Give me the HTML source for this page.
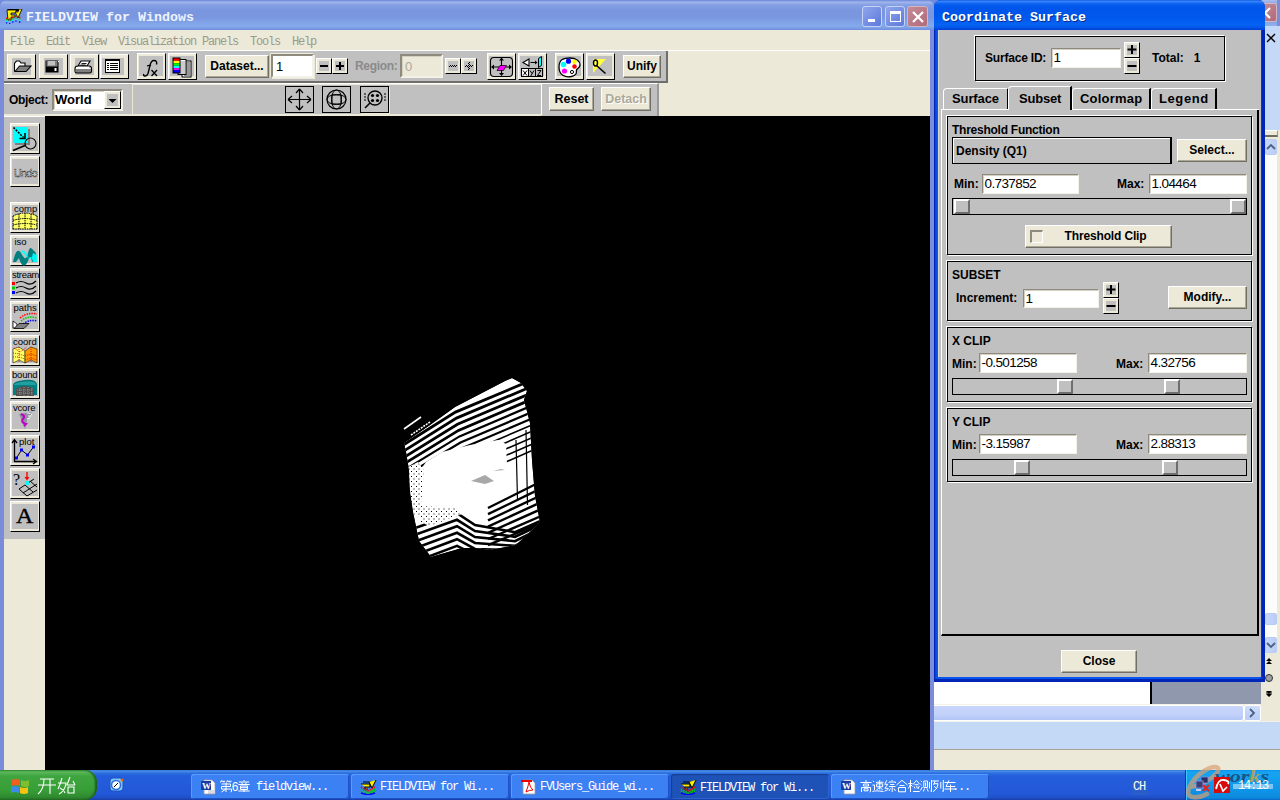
<!DOCTYPE html>
<html><head><meta charset="utf-8">
<style>
*{margin:0;padding:0;box-sizing:border-box}
html,body{width:1280px;height:800px;overflow:hidden;background:#ECE9D8;font-family:"Liberation Sans",sans-serif}
.a{position:absolute}
.sans{font-family:"Liberation Sans",sans-serif}
.b{font-weight:bold}
.mono{font-family:"Liberation Mono",monospace}
/* XP-ish beige push button */
.pb{position:absolute;background:#ECE9D8;border-top:1px solid #fff;border-left:1px solid #fff;border-right:1px solid #716F64;border-bottom:1px solid #716F64;box-shadow:inset -1px -1px 0 #ACA899;font:bold 12px "Liberation Sans",sans-serif;color:#000;text-align:center;white-space:nowrap}
/* toolbar icon button */
.tb{position:absolute;background:#ECE9D8;border-top:1px solid #fff;border-left:1px solid #fff;border-right:1px solid #000;border-bottom:1px solid #000}
.tb>i{position:absolute;left:4px;top:3px;right:3px;bottom:3px;background:#C0C0C0;display:block}
.tb svg{position:absolute;left:0;top:0}
/* text field */
.tf{position:absolute;background:#fff;border-top:1px solid #8E8B7E;border-left:1px solid #8E8B7E;border-right:1px solid #F4F2E8;border-bottom:1px solid #F4F2E8;box-shadow:inset 1px 1px 0 #D4D0C4;font:12px "Liberation Sans",sans-serif;color:#000;padding-left:3px;white-space:nowrap}
.lbl{position:absolute;font:bold 12px "Liberation Sans",sans-serif;color:#000;white-space:nowrap}
.grp{position:absolute;border:1px solid #000;box-shadow:-1px -1px 0 #fff,1px 1px 0 #fff}
.sld{position:absolute;border:1px solid #000;background:#C0C0C0}
.thumb{position:absolute;top:0;width:16px;height:15px;background:#C0C0C0;border-top:2px solid #fff;border-left:2px solid #fff;border-right:2px solid #6E6E6E;border-bottom:2px solid #6E6E6E}
.spin{position:absolute;background:#ECE9D8;border-top:1px solid #fff;border-left:1px solid #fff;border-right:1px solid #000;border-bottom:1px solid #000}
.spin::before{content:"";position:absolute;left:2px;top:2px;right:2px;bottom:2px;background:#C0C0C0}
.spin svg{position:relative}
.spin svg.a{position:absolute}
.tsk{position:absolute;top:774px;height:25px;border-radius:3px;background:#3C81F3;box-shadow:inset 1px 1px 0 #5A9BFF,inset -1px -1px 0 #1D52C4;color:#fff;font:12px "Liberation Mono",monospace;letter-spacing:-1.2px;white-space:nowrap}
</style></head>
<body>

<!-- ================= MAIN WINDOW ================= -->
<div class="a" style="left:0;top:0;width:1280px;height:20px;background:#6F8BDD"></div>
<div class="a" style="left:0;top:0;width:934px;height:770px;background:#7B8CDB;border-radius:7px 7px 0 0"></div>
<!-- title bar -->
<div class="a" style="left:0;top:0;width:934px;height:30px;border-radius:7px 7px 0 0;background:linear-gradient(#6F8BDD 0,#7E98E0 1px,#A3B9EC 2px,#97AEE9 3px,#859FE4 5px,#7A96DF 10px,#7A96DF 17px,#7FA2E6 22px,#83AAEC 26px,#7C9FE6 28px,#6F8BDD 30px)"></div>
<div class="a mono b" style="left:26px;top:10px;font-size:13.33px;color:#EEF2FC;letter-spacing:0px">FIELDVIEW for Windows</div>
<!-- app icon -->
<svg class="a" style="left:6px;top:9px" width="17" height="15" viewBox="0 0 17 15">
<rect x="1.5" y="0" width="14" height="2" fill="#000"/>
<path d="M1 1h9v3H5v2h4v2H5v3H2z" fill="#FFEF00" stroke="#000" stroke-width=".8"/>
<path d="M9 3l3 6 4-9h-3l-1 3z" fill="#FFEF00" stroke="#000" stroke-width=".8"/>
<g fill="none" stroke-width="1.3">
<path d="M0 9q3 2 6 0t6-1 4 0" stroke="#f00" stroke-dasharray="1.3 2"/>
<path d="M0 10.5q3 2 6 0t6-1 4 0" stroke="#0c0" stroke-dasharray="1.3 2"/>
<path d="M0 12q3 2 6 0t6-1 4 0" stroke="#0ff" stroke-dasharray="1.3 2"/>
<path d="M0 13.5q3 2 6 0t6-1 4 0" stroke="#00f" stroke-dasharray="1.3 2"/>
</g>
</svg>
<!-- title buttons -->
<div class="a" style="left:862px;top:6px;width:20px;height:21px;border:1px solid #C5D3F5;border-radius:3px;background:linear-gradient(135deg,#8FA6EC,#5D79DC)"><div class="a" style="left:5px;top:12px;width:7px;height:3px;background:#fff"></div></div>
<div class="a" style="left:885px;top:6px;width:20px;height:21px;border:1px solid #C5D3F5;border-radius:3px;background:linear-gradient(135deg,#8FA6EC,#5D79DC)"><div class="a" style="left:4px;top:4px;width:11px;height:11px;border:1px solid #fff;border-top-width:3px"></div></div>
<div class="a" style="left:907px;top:6px;width:21px;height:21px;border:1px solid #D2B7C0;border-radius:3px;background:linear-gradient(135deg,#C48B97,#B06A78)">
<svg class="a" style="left:3px;top:3px" width="14" height="14"><path d="M2 2L12 12M12 2L2 12" stroke="#fff" stroke-width="2.2"/></svg></div>

<div class="a" style="left:4px;top:30px;width:926px;height:740px;background:#ECE9D8"></div>
<!-- menu bar -->
<div class="a" style="left:4px;top:30px;width:926px;height:20px;background:#ECE9D8"></div>
<div class="a" style="left:4px;top:50px;width:926px;height:1px;background:#fff"></div>
<div class="a mono" style="left:10px;top:35px;font-size:12px;letter-spacing:-1.2px;color:#9C9A8A;white-space:pre">File  Edit  View  Visualization Panels  Tools  Help</div>

<!-- toolbar row 1 -->
<div class="a" style="left:4px;top:51px;width:664px;height:32px;background:#C0C0C0;border-right:2px solid #6E6E6E;border-bottom:2px solid #6E6E6E"></div>
<!-- toolbar row 2 -->
<div class="a" style="left:4px;top:83px;width:655px;height:33px;background:#C0C0C0;border-top:1px solid #fff;border-right:2px solid #9A9A9A"></div>
<div class="a" style="left:132px;top:84px;width:409px;height:31px;border-left:1px solid #ECE9D8;border-top:1px solid #ECE9D8;border-bottom:1px solid #ECE9D8"></div>
<div class="a" style="left:541px;top:84px;width:1px;height:31px;background:#fff"></div>
<div class="a" style="left:4px;top:114px;width:537px;height:2px;background:#ECE9D8"></div>

<!-- left toolbar -->
<div class="a" style="left:4px;top:116px;width:41px;height:423px;background:#C0C0C0;border-top:1px solid #fff"></div>

<!-- viewport -->
<div class="a" style="left:45px;top:116px;width:885px;height:654px;background:#000"></div>

<!-- toolbar1 buttons -->
<div class="tb" style="left:7px;top:54px;width:29px;height:25px"><i style="left:4px;top:3px;right:4px;bottom:3px"></i>
<svg style="left:-1px;top:-1px" width="29" height="25"><path d="M7.5 17.5V9.5l2-2.5h3l1.5 2h4v3" fill="#fff" stroke="#000" stroke-width="1.1"/><path d="M8 17.5L12.5 12H24L19 17.5Z" fill="#808080" stroke="#000" stroke-width="1.1"/></svg></div>
<div class="tb" style="left:39px;top:54px;width:29px;height:25px"><i style="left:4px;top:3px;right:4px;bottom:3px"></i>
<svg style="left:-1px;top:-1px" width="29" height="25"><rect x="6.5" y="6.5" width="13" height="12" fill="#000"/><rect x="7.5" y="7" width="11" height="5.5" fill="#808080"/><rect x="9" y="7" width="7" height="4.5" fill="#C0C0C0"/><rect x="15.5" y="14" width="2" height="3" fill="#fff"/><rect x="19" y="7" width="1" height="1" fill="#fff"/></svg></div>
<div class="tb" style="left:70px;top:54px;width:29px;height:25px"><i style="left:4px;top:3px;right:4px;bottom:3px"></i>
<svg style="left:-1px;top:-1px" width="29" height="25"><path d="M8 12l3-5h9l-3 5z" fill="#fff" stroke="#000" stroke-width="1.1"/><path d="M11.5 9.5h5M10.5 11h5" stroke="#000" stroke-width=".9"/><path d="M5 14.5q0-2.5 3-2.5h11q2.5 0 2.5 2.5v3q0 1.5-2 1.5H7q-2 0-2-1.5z" fill="#fff" stroke="#000" stroke-width="1.1"/><path d="M5.5 16h16M6 18h15" stroke="#000" stroke-width="1"/><path d="M19 13l2 1M19 15.5l2 1" stroke="#888" stroke-width="1"/></svg></div>
<div class="tb" style="left:100px;top:54px;width:29px;height:25px"><i style="left:1px;top:3px;right:4px;bottom:3px"></i>
<svg style="left:-1px;top:-1px" width="29" height="25"><rect x="5.5" y="5.5" width="14" height="13" fill="#fff" stroke="#000"/><rect x="5" y="5" width="15" height="2" fill="#000"/><path d="M7 9.5h2M10 9.5h8M7 11.5h2M10 11.5h8M7 13.5h2M10 13.5h8M7 15.5h2M10 15.5h8" stroke="#000" stroke-width="1"/></svg></div>
<div class="tb" style="left:137px;top:53px;width:29px;height:27px"><i style="left:1px;top:2px;right:2px;bottom:3px"></i>
<svg style="left:-1px;top:-1px" width="29" height="27"><path d="M19.5 11.5q1-4-2.5-4q-3 0-4 5l-2 8q-1 3-3.5 2.5q-1.5-.5-.5-2" fill="none" stroke="#000" stroke-width="1.4"/><path d="M10 13q2-1 4-.5" stroke="#000" stroke-width="1.1"/><path d="M14.5 17l5.5 6M20 17l-5.5 6" stroke="#000" stroke-width="1.3"/></svg></div>
<div class="tb" style="left:168px;top:53px;width:29px;height:27px"><i style="left:1px;top:2px;right:2px;bottom:3px"></i>
<svg style="left:-1px;top:-1px" width="29" height="27"><rect x="14" y="8" width="9" height="16" fill="#fff" stroke="#000" stroke-width="1"/><rect x="16" y="9" width="6" height="14" fill="#999"/><rect x="10" y="6.5" width="8" height="15" fill="#fff" stroke="#000" stroke-width="1"/><rect x="12" y="8" width="5" height="13" fill="#aaa" opacity=".6"/><rect x="4.5" y="4.5" width="8" height="16" fill="#000"/><rect x="5.5" y="5.5" width="6" height="2.4" fill="#f00"/><rect x="5.5" y="7.9" width="6" height="2.4" fill="#ff0"/><rect x="5.5" y="10.3" width="6" height="2.4" fill="#0f0"/><rect x="5.5" y="12.7" width="6" height="2.4" fill="#0ff"/><rect x="5.5" y="15.1" width="6" height="2.2" fill="#f0f"/><rect x="5.5" y="17.3" width="6" height="2.2" fill="#00f"/></svg></div>

<div class="pb" style="left:205px;top:55px;width:64px;height:23px;line-height:21px">Dataset...</div>
<div class="tf" style="left:271px;top:54px;width:43px;height:24px;line-height:22px;font-size:13px;border:2px solid #8E8B7E;border-right-color:#F4F2E8;border-bottom-color:#F4F2E8;box-shadow:-1px -1px 0 #ECE9D8, 1px 1px 0 #ECE9D8">1</div>
<div class="spin" style="left:316px;top:58px;width:16px;height:16px"><svg width="14" height="14"><path d="M3 7h8" stroke="#000" stroke-width="2"/></svg></div>
<div class="spin" style="left:332px;top:58px;width:16px;height:16px"><svg width="14" height="14"><path d="M3 7h8M7 3v8" stroke="#000" stroke-width="2"/></svg></div>
<div class="lbl" style="left:355px;top:59px;color:#8A8A8A;letter-spacing:-0.3px">Region:</div>
<div class="tf" style="left:400px;top:54px;width:43px;height:24px;line-height:22px;background:#ECE9D8;color:#ACA899;font-size:13px;border:2px solid #8E8B7E;border-right-color:#F4F2E8;border-bottom-color:#F4F2E8">0</div>
<div class="spin" style="left:445px;top:58px;width:16px;height:16px"><svg class="a" style="left:-1px;top:-1px" width="16" height="16" shape-rendering="crispEdges" fill="#000"><rect x="4" y="8" width="1" height="1"/><rect x="5" y="7" width="1" height="1"/><rect x="6" y="8" width="1" height="1"/><rect x="7" y="7" width="1" height="1"/><rect x="8" y="8" width="1" height="1"/><rect x="9" y="7" width="1" height="1"/><rect x="10" y="8" width="1" height="1"/><rect x="11" y="7" width="1" height="1"/></svg></div>
<div class="spin" style="left:461px;top:58px;width:16px;height:16px"><svg class="a" style="left:-1px;top:-1px" width="16" height="16" shape-rendering="crispEdges" fill="#000"><rect x="8" y="4" width="1" height="1"/><rect x="7" y="5" width="1" height="1"/><rect x="8" y="6" width="1" height="1"/><rect x="5" y="7" width="1" height="1"/><rect x="7" y="7" width="1" height="1"/><rect x="9" y="7" width="1" height="1"/><rect x="11" y="7" width="1" height="1"/><rect x="4" y="8" width="1" height="1"/><rect x="6" y="8" width="1" height="1"/><rect x="8" y="8" width="1" height="1"/><rect x="10" y="8" width="1" height="1"/><rect x="7" y="9" width="1" height="1"/><rect x="8" y="10" width="1" height="1"/><rect x="7" y="11" width="1" height="1"/></svg></div>

<div class="tb" style="left:487px;top:53px;width:29px;height:27px"><i style="left:1px;top:2px;right:2px;bottom:3px"></i>
<svg style="left:-1px;top:-1px" width="29" height="27"><rect x="3.5" y="4.5" width="22" height="19" rx="3.5" fill="none" stroke="#000" stroke-width="1.1"/><path d="M14.5 6v15M5.5 14h18" stroke="#000" stroke-width="1.1"/><path d="M14.5 4.5l-2.5 3h5zM14.5 23l-2.5-3h5zM4 14l3-2.5v5zM25 14l-3-2.5v5z" fill="#000"/><path d="M10 17.5l3-5h6.5l-3 5z" fill="#f0f" stroke="#000" stroke-width=".7"/></svg></div>
<div class="tb" style="left:518px;top:53px;width:29px;height:27px"><i style="left:1px;top:2px;right:2px;bottom:3px"></i>
<svg style="left:-1px;top:-1px" width="29" height="27"><path d="M5 9.5l6-3.5v7z" fill="#fff" stroke="#000" stroke-width="1.1"/><path d="M12.5 9.5h5" stroke="#000" stroke-width="1"/><path d="M17 7.5l2.5 2-2.5 2z" fill="#000"/><path d="M20.5 5.5l3-2v9l-3 2z" fill="#0ff" stroke="#000" stroke-width="1"/><rect x="3.5" y="15.5" width="7" height="8" fill="#fff" stroke="#000"/><rect x="10.5" y="15.5" width="7" height="8" fill="#C0C0C0" stroke="#000"/><rect x="17.5" y="15.5" width="7" height="8" fill="#C0C0C0" stroke="#000"/><path d="M5 17.5l4 5M9 17.5l-4 5M12 17.5l2 3M16 17.5l-3.5 6M19.5 17.5h3.5l-3.5 5h3.5" stroke="#000" stroke-width="1" fill="none"/></svg></div>
<div class="tb" style="left:555px;top:53px;width:29px;height:27px"><i style="left:1px;top:2px;right:2px;bottom:3px"></i>
<svg style="left:-1px;top:-1px" width="29" height="27"><path d="M15 5c6 0 10 3 10 7 0 3-3 3-3.5 5s1.5 5-5 6.5S4 22 4 14 9 5 15 5z" fill="#fff" stroke="#000" stroke-width="1.3"/><circle cx="8.5" cy="11.5" r="2.8" fill="#0ff"/><circle cx="13.5" cy="8.2" r="2.6" fill="#00f"/><circle cx="19.5" cy="8.8" r="2.3" fill="#ff0"/><circle cx="19.5" cy="13.5" r="2.3" fill="#f00"/><circle cx="9.5" cy="18" r="2.6" fill="#f0f"/><circle cx="17" cy="19" r="1.6" fill="none" stroke="#000" stroke-width="1"/></svg></div>
<div class="tb" style="left:586px;top:53px;width:29px;height:27px"><i style="left:1px;top:2px;right:2px;bottom:3px"></i>
<svg style="left:-1px;top:-1px" width="29" height="27"><path d="M7 6h13L7 20z" fill="#FFFF40"/><ellipse cx="9.5" cy="10" rx="2" ry="3" fill="none" stroke="#000" stroke-width="1.4"/><path d="M10.5 12.5l9 8" stroke="#000" stroke-width="1.5"/></svg></div>
<div class="pb" style="left:623px;top:55px;width:38px;height:23px;line-height:21px">Unify</div>


<!-- toolbar2 -->
<div class="lbl" style="left:9px;top:93px;letter-spacing:-0.3px">Object:</div>
<div class="tf" style="left:52px;top:89px;width:71px;height:22px;border:2px solid #8E8B7E;border-right-color:#F4F2E8;border-bottom-color:#F4F2E8;padding-left:1px;font:bold 13px 'Liberation Sans',sans-serif;line-height:18px">World</div>
<div class="spin" style="left:104px;top:91px;width:17px;height:18px"><svg width="15" height="16"><path d="M3.5 7h8l-4 4z" fill="#000"/></svg></div>
<div class="a" style="left:285px;top:86px;width:29px;height:27px;border:1px solid #000;background:#C0C0C0"><svg width="27" height="25"><path d="M13.5 3v19M3 12.5h21" stroke="#000" stroke-width="1.2"/><path d="M13.5 2l-3.5 4M13.5 2l3.5 4M13.5 23l-3.5-4M13.5 23l3.5-4M2 12.5l4-3.5M2 12.5l4 3.5M25 12.5l-4-3.5M25 12.5l-4 3.5" stroke="#000" stroke-width="1.2"/></svg></div>
<div class="a" style="left:322px;top:86px;width:29px;height:27px;border:1px solid #000;background:#C0C0C0"><svg width="27" height="25"><circle cx="13.5" cy="12.5" r="9.5" fill="none" stroke="#000" stroke-width="1.2"/><ellipse cx="13.5" cy="12.5" rx="9.5" ry="5" fill="none" stroke="#000"/><ellipse cx="13.5" cy="12.5" rx="5" ry="9.5" fill="none" stroke="#000"/><rect x="9" y="8" width="9" height="9" fill="none" stroke="#000"/></svg></div>
<div class="a" style="left:360px;top:86px;width:29px;height:27px;border:1px solid #000;background:#C0C0C0;box-shadow:1px 1px 0 #ECE9D8"><svg width="27" height="25"><circle cx="14" cy="11" r="7" fill="none" stroke="#000" stroke-width="1.3"/><circle cx="11.5" cy="8.5" r="1.6"/><circle cx="16.5" cy="8.5" r="1.6"/><circle cx="11.5" cy="13.5" r="1.6"/><circle cx="16.5" cy="13.5" r="1.6"/><path d="M9 16l-5 5" stroke="#000" stroke-width="1.6"/><path d="M3 7h2M3 10h2M3 13h2M23 7h2M23 10h2M23 13h2" stroke="#000"/></svg></div>
<div class="pb" style="left:549px;top:87px;width:45px;height:24px;line-height:22px;font-size:12.5px">Reset</div>
<div class="pb" style="left:601px;top:87px;width:50px;height:24px;line-height:22px;font-size:12.5px;color:#ACA899;text-shadow:1px 1px 0 #fff">Detach</div>


<div class="tb" style="left:10px;top:123px;width:30px;height:31px"><i style="left:1px;top:2px;right:1px;bottom:2px"></i><svg style="left:-1px;top:-1px" width="31" height="31"><rect x="5" y="6" width="15" height="16" fill="#808080"/><rect x="3" y="4" width="15" height="16" fill="#0ff"/><path d="M3.5 4.5l10 10" stroke="#000" stroke-width="1.6" stroke-dasharray="2 1.2"/><path d="M15 10v5.5h-5.5" fill="none" stroke="#000" stroke-width="1.6"/><circle cx="20.5" cy="20.5" r="5.5" fill="none" stroke="#000" stroke-width="1.1"/><path d="M3 27.5l12-5" stroke="#000" stroke-width="1.8"/></svg></div>
<div class="tb" style="left:10px;top:156px;width:30px;height:31px"><i style="left:1px;top:2px;right:1px;bottom:2px"></i><svg style="left:-1px;top:-1px" width="31" height="31"><text x="4" y="21" font-family="Liberation Sans" font-size="11.5" fill="none" stroke="#000" stroke-width=".6" stroke-dasharray="1 .8" letter-spacing="-0.6" textLength="23" lengthAdjust="spacingAndGlyphs">Undo</text></svg></div>
<div class="tb" style="left:10px;top:202px;width:30px;height:31px"><i style="left:1px;top:2px;right:1px;bottom:2px"></i><svg style="left:-1px;top:-1px" width="31" height="31"><text x="4" y="9.5" font-family="Liberation Sans" font-size="9.5" fill="#000">comp</text><path d="M3 27V14q12-6 24 0v13z" fill="#FFFF66"/><path d="M3 14q12-6 24 0M3 18.5q12-4 24 0M3 23q12-3 24 0M3 27h24M3 14v13M9 12v15M15 11v16M21 12v15M27 14v13" stroke="#000" stroke-width="1" fill="none" stroke-dasharray="1.5 .8"/></svg></div>
<div class="tb" style="left:10px;top:235px;width:30px;height:31px"><i style="left:1px;top:2px;right:1px;bottom:2px"></i><svg style="left:-1px;top:-1px" width="31" height="31"><text x="4.5" y="9.5" font-family="Liberation Sans" font-size="9.5" fill="#000">iso</text><path d="M3 27c2-10 5-14 8-9s5 9 7 0 4-4 8 0v9h-4c-1-6-2-6-4-1s-6 8-9-3l-3 4z" fill="#008080"/><path d="M11 16q4-2 7 6q3 6 5-4l4 2v7h-4q-2-8-4-3z" fill="#00FFFF" opacity=".9"/></svg></div>
<div class="tb" style="left:10px;top:268px;width:30px;height:31px"><i style="left:1px;top:2px;right:1px;bottom:2px"></i><svg style="left:-1px;top:-1px" width="31" height="31"><text x="2" y="9.5" font-family="Liberation Sans" font-size="9.5" fill="#000" letter-spacing="-0.3">stream</text><path d="M6 15q5-3 10 0t10-2M6 20q5-3 10 0t10-2M6 25q5-3 10 0t10-2" stroke="#000" fill="none" stroke-width="1.2"/><rect x="2" y="14" width="3" height="3" fill="#f00"/><rect x="2" y="18.5" width="3" height="3" fill="#0c0"/><rect x="2" y="23" width="3" height="3" fill="#00f"/></svg></div>
<div class="tb" style="left:10px;top:301px;width:30px;height:31px"><i style="left:1px;top:2px;right:1px;bottom:2px"></i><svg style="left:-1px;top:-1px" width="31" height="31"><text x="3.5" y="9.5" font-family="Liberation Sans" font-size="9.5" fill="#000">paths</text><path d="M10 17q7-6 17-4" stroke="#f00" fill="none" stroke-width="1.5" stroke-dasharray="1.5 1"/><path d="M11 20q7-6 16-3" stroke="#0c0" fill="none" stroke-width="1.5" stroke-dasharray="1.5 1"/><path d="M13 23q7-5 14-3" stroke="#00f" fill="none" stroke-width="1.5" stroke-dasharray="1.5 1"/><path d="M3 20l4 3v4H3z" fill="#fff" stroke="#000" stroke-width=".8"/><path d="M4 27.5l5-5h10l-5 5z" fill="#808080" stroke="#000" stroke-width=".8"/></svg></div>
<div class="tb" style="left:10px;top:335px;width:30px;height:31px"><i style="left:1px;top:2px;right:1px;bottom:2px"></i><svg style="left:-1px;top:-1px" width="31" height="31"><text x="3" y="9.5" font-family="Liberation Sans" font-size="9.5" fill="#000">coord</text><path d="M3 14l6-2 6 4v12l-6-3-6 3z" fill="#FFFF66" stroke="#000" stroke-width=".5"/><path d="M15 16l6-4 6 2v14l-6-3-6 3z" fill="#FF9900" stroke="#000" stroke-width=".5"/><path d="M4 13l6 4 7-5M3 18l6 1 6 2M3 22l6 0 6 2M15 21l6-2 6 2M15 25l6-2 6 2M9 12v16M21 12v16" stroke="#C00" stroke-width=".8" fill="none" stroke-dasharray="1 1"/></svg></div>
<div class="tb" style="left:10px;top:368px;width:30px;height:31px"><i style="left:1px;top:2px;right:1px;bottom:2px"></i><svg style="left:-1px;top:-1px" width="31" height="31"><text x="2" y="9.5" font-family="Liberation Sans" font-size="9.5" fill="#000" letter-spacing="-0.2">bound</text><path d="M3 17q0-4 12-5t12 5v10h-3v-4q-2-2-9-2t-9 2v4H3z" fill="#008080"/><path d="M3 17q1-3 12-4t12 4" fill="#20A0A0" stroke="#006060" stroke-width=".6"/><path d="M6 21q4-3 9-3t9 3v7H6z" fill="#505050"/><path d="M7 22h16M7 25h16M10 20v8M14 19v9M18 19v9M22 20v8" stroke="#C0C0C0" stroke-width=".6" stroke-dasharray="1 1"/></svg></div>
<div class="tb" style="left:10px;top:401px;width:30px;height:31px"><i style="left:1px;top:2px;right:1px;bottom:2px"></i><svg style="left:-1px;top:-1px" width="31" height="31"><text x="3" y="9.5" font-family="Liberation Sans" font-size="9.5" fill="#000" letter-spacing="-0.2">vcore</text><path d="M9 13l13-2-5 8-2 9-3-8z" fill="#7A7A9A" opacity=".7"/><path d="M11 13q5 2 2 5t3 5l-2 2" stroke="#C000C0" stroke-width="2.2" fill="none"/><path d="M17 12q4 0 5 2M18 15l3 0M17 18l3-1" stroke="#fff" stroke-width="1"/></svg></div>
<div class="tb" style="left:10px;top:435px;width:30px;height:31px"><i style="left:1px;top:2px;right:1px;bottom:2px"></i><svg style="left:-1px;top:-1px" width="31" height="31"><path d="M4.5 27V5M2 8l2.5-3.5L7 8M4.5 26.5h22M23 24l3.5 2.5-3.5 2.5" stroke="#000" stroke-width="1.3" fill="none"/><text x="9" y="10" font-family="Liberation Sans" font-size="9.5" fill="#000">plot</text><path d="M6.5 23l5-8 6 5 6-8" stroke="#000" fill="none" stroke-width="1"/><rect x="5" y="21.5" width="3" height="3" fill="#00f"/><rect x="10" y="13.5" width="3" height="3" fill="#00f"/><rect x="16" y="18.5" width="3" height="3" fill="#00f"/><rect x="22" y="10.5" width="3" height="3" fill="#00f"/></svg></div>
<div class="tb" style="left:10px;top:468px;width:30px;height:31px"><i style="left:1px;top:2px;right:1px;bottom:2px"></i><svg style="left:-1px;top:-1px" width="31" height="31"><text x="3" y="17" font-family="Liberation Serif" font-size="16" fill="#000">?</text><path d="M17 4v7" stroke="#f00" stroke-width="1.4"/><path d="M14.5 9l2.5 3.5 2.5-3.5z" fill="#f00"/><path d="M9 21l15-10M13 25l14-9M17 28l10-6M9 21l8 7M15 17l8 7M20 13l7 6" stroke="#000" stroke-width="1" fill="none"/><rect x="15" y="13" width="4" height="4" fill="#0ff"/></svg></div>
<div class="tb" style="left:10px;top:501px;width:30px;height:31px"><i style="left:1px;top:2px;right:1px;bottom:2px"></i><svg style="left:-1px;top:-1px" width="31" height="31"><text x="0" y="0" transform="translate(6 22) scale(1.2 1)" font-family="Liberation Serif" font-size="20" fill="#000" stroke="#000" stroke-width=".4">A</text></svg></div>

<!-- 3D figure -->
<svg class="a" style="left:380px;top:360px" width="180" height="220" viewBox="380 360 180 220">
<defs><clipPath id="env"><polygon points="404,443 430,425 455,407 480,394 505,381 512,378 521,383 527,391 524,400 530,423 532,460 535,496 540,522 530,532 516,545 490,550 475,548 462,548 431,557 419,541 414,517 410,491 409,470 406,452"/></clipPath>
<pattern id="dt" width="5" height="5" patternUnits="userSpaceOnUse"><rect width="5" height="5" fill="#fff"/><rect x="1" y="1" width="1" height="1" fill="#000"/><rect x="3.5" y="3.5" width="1" height="1" fill="#000"/></pattern></defs>
<path d="M404 429 L421 417" stroke="#fff" stroke-width="1.6"/>
<path d="M411 435 L430 422" stroke="#fff" stroke-width="1.6" stroke-dasharray="2 1"/>
<g clip-path="url(#env)">
<polygon points="404,443 430,425 455,407 480,394 505,381 512,378 521,383 527,391 524,400 530,423 532,460 535,496 540,522 530,532 516,545 490,550 475,548 462,548 431,557 419,541 414,517 410,491 409,470 406,452" fill="#fff"/>
<g stroke="#000" fill="none"><path d="M395.3 450.0 L455.5 412.1 L548.0 373.2" stroke-width="2.80"/><path d="M395.9 456.0 L456.5 418.1 L548.0 379.6" stroke-width="2.80"/><path d="M396.5 462.0 L457.5 424.2 L548.0 386.0" stroke-width="2.80"/><path d="M397.1 468.0 L458.5 430.4 L548.0 392.4" stroke-width="2.80"/><path d="M397.7 474.0 L459.5 436.4 L548.0 398.8" stroke-width="2.20"/><path d="M398.3 480.0 L460.5 442.6 L548.0 405.2" stroke-width="2.20"/><path d="M398.9 486.0 L461.5 448.6 L548.0 411.6" stroke-width="2.20"/><path d="M399.5 492.0 L462.5 454.8 L548.0 418.0" stroke-width="1.60"/><path d="M400.1 498.0 L463.5 460.9 L548.0 424.4" stroke-width="1.60"/><path d="M400.7 504.0 L464.5 466.9 L548.0 430.8" stroke-width="1.60"/><path d="M401.3 510.0 L465.5 473.1 L548.0 437.2" stroke-width="1.60"/><path d="M401.9 516.0 L466.5 479.1 L548.0 443.6" stroke-width="1.60"/><path d="M516.0 440.0 L517.5 500.0" stroke-width="1.20"/><path d="M526.0 430.0 L527.5 505.0" stroke-width="1.20"/><path d="M488.0 508.0 L548.0 478.0" stroke-width="2.40"/><path d="M488.0 514.2 L548.0 485.0" stroke-width="2.40"/><path d="M488.0 520.4 L548.0 492.0" stroke-width="2.40"/><path d="M488.0 526.6 L548.0 499.0" stroke-width="2.40"/><path d="M488.0 532.8 L548.0 506.0" stroke-width="2.40"/><path d="M488.0 539.0 L548.0 513.0" stroke-width="2.40"/><path d="M488.0 545.2 L548.0 520.0" stroke-width="2.40"/><path d="M400.0 533.4 L457.0 513.2 L475.0 525.0 L515.0 532.2 L548.0 517.8" stroke-width="2.60"/><path d="M400.0 540.2 L457.0 519.8 L475.0 531.0 L515.0 536.8 L548.0 521.2" stroke-width="2.60"/><path d="M400.0 547.0 L457.0 526.2 L475.0 537.0 L515.0 541.2 L548.0 524.8" stroke-width="2.60"/><path d="M400.0 553.8 L457.0 532.8 L475.0 543.0 L515.0 545.8 L548.0 528.2" stroke-width="2.60"/><path d="M400.0 560.6 L457.0 539.2 L475.0 549.0 L515.0 550.2 L548.0 531.8" stroke-width="2.60"/><path d="M400.0 567.4 L457.0 545.8 L475.0 555.0 L515.0 554.8 L548.0 535.2" stroke-width="2.60"/></g>
<polygon points="416,476 426,462 442,452 470,445 498,440 506,444 507,465 501,490 489,503 465,510 440,512 420,508" fill="#fff"/>
<polygon points="406,468 418,462 424,470 420,515 410,515" fill="url(#dt)"/>
<polygon points="420,506 455,508 462,514 430,526 420,522" fill="url(#dt)"/>
</g>
<path d="M471 481 L485 475 L494 481 L485 484 Z" fill="#A8A8A8"/>
<path d="M493 471 L501 469 L505 470 Z" fill="#A8A8A8"/>
</svg>


<!-- ================= RIGHT BACKGROUND WINDOW ================= -->

<!-- right strip of background window -->
<div class="a" style="left:1265px;top:0;width:15px;height:130px;background:#C4D8F7"></div>
<div class="a" style="left:1262px;top:0;width:18px;height:26px;background:linear-gradient(#A9BDEE,#7C97E0 6px,#7D99E2 18px,#8DAEEC 25px)"></div>
<div class="a" style="left:1277px;top:0;width:3px;height:26px;background:#7B8CDB"></div>
<div class="a" style="left:1262px;top:3px;width:15px;height:19px;border-radius:3px;background:linear-gradient(135deg,#C48B97,#B06A78);border:1px solid #D2B7C0;border-left:0"><svg width="14" height="18"><path d="M-2 4L8 14M8 4L-2 14" stroke="#fff" stroke-width="2.2"/></svg></div>
<svg class="a" style="left:1266px;top:33px" width="10" height="10"><path d="M1 1l8 8M9 1l-8 8" stroke="#000" stroke-width="1.4"/></svg>
<div class="a" style="left:1265px;top:130px;width:13px;height:7px;background:#ECE9D8;border-top:1px solid #fff;border-bottom:2px solid #6E6C60;border-right:1px solid #999"></div>
<div class="a" style="left:1265px;top:137px;width:15px;height:633px;background:#ECE9D8"></div>
<div class="a" style="left:1265px;top:154px;width:12px;height:498px;background:#FCFCFA"></div>
<div class="a" style="left:1265px;top:139px;width:12px;height:16px;border-radius:2px;background:linear-gradient(90deg,#C8D8FB,#BACCF8);border:1px solid #B8CCF4"><svg width="10" height="14"><path d="M1 9l4-4 4 4" stroke="#4D6185" stroke-width="1.8" fill="none"/></svg></div>
<div class="a" style="left:1265px;top:613px;width:12px;height:12px;border-radius:2px;background:linear-gradient(90deg,#C8D8FB,#BACCF8);border:1px solid #B8CCF4"></div>
<div class="a" style="left:1265px;top:637px;width:12px;height:16px;border-radius:2px;background:linear-gradient(90deg,#C8D8FB,#BACCF8);border:1px solid #B8CCF4"><svg width="10" height="14"><path d="M1 5l4 4 4-4" stroke="#4D6185" stroke-width="1.8" fill="none"/></svg></div>
<svg class="a" style="left:1263px;top:655px" width="12" height="50"><path d="M3 6h6l-3-3zM3 9h6l-3-3z" fill="#000"/><circle cx="6" cy="23" r="3.5" fill="#A0A0A0" stroke="#333"/><path d="M3 39h6l-3 3zM3 36h6l-3 3z" fill="#000"/><path d="M3 38h6" stroke="#000"/></svg>

<!-- below dialog -->
<div class="a" style="left:934px;top:681px;width:217px;height:23px;background:#fff"></div>
<div class="a" style="left:1150px;top:681px;width:2px;height:23px;background:#000"></div>
<div class="a" style="left:1152px;top:681px;width:109px;height:23px;background:#8F98AC"></div>
<div class="a" style="left:934px;top:704px;width:327px;height:1px;background:#F4F2E8"></div>
<div class="a" style="left:934px;top:705px;width:310px;height:16px;border-radius:0 3px 3px 0;background:linear-gradient(#C9D6FB,#C3D2FA 8px,#B2C6F6);border:1px solid #FFF;border-left:0"></div>
<div class="a" style="left:1244px;top:705px;width:17px;height:16px;border-radius:2px;background:linear-gradient(#CFDCFB,#B9CCF7);border:1px solid #fff"><svg width="15" height="14"><path d="M5 3l4 4-4 4" stroke="#4D6185" stroke-width="1.8" fill="none"/></svg></div>
<div class="a" style="left:934px;top:721px;width:346px;height:1px;background:#F4F2E8"></div>
<div class="a" style="left:934px;top:722px;width:346px;height:27px;background:#C3D9F6"></div>
<div class="a" style="left:934px;top:749px;width:346px;height:1px;background:#A9A595"></div>
<div class="a" style="left:934px;top:750px;width:346px;height:20px;background:#ECE9D8"></div>


<!-- ================= DIALOG ================= -->
<div class="a" style="left:934px;top:0;width:331px;height:682px;background:#0026B8;border-radius:7px 7px 0 0"></div>
<div class="a" style="left:935px;top:20px;width:327px;height:659px;background:linear-gradient(90deg,#0040D8,#0A55EE 2px,#0A55EE 323px,#0036C8 327px)"></div>
<div class="a" style="left:934px;top:0;width:331px;height:30px;border-radius:7px 7px 0 0;background:linear-gradient(#0348E0 0,#3D8DFA 1px,#2A7CF6 2px,#0A5FF2 4px,#0055EA 8px,#0058EC 18px,#0564F5 25px,#0353E4 28px,#003DD7 30px)"></div>
<div class="a mono b" style="left:942px;top:10px;font-size:13.33px;color:#fff;text-shadow:1px 1px 0 #0A2A90">Coordinate Surface</div>
<div class="a" style="left:938px;top:30px;width:323px;height:647px;background:#C0C0C0"></div>

<!-- dialog content -->
<div class="a" style="left:938px;top:30px;width:1px;height:647px;background:#D8D4C8"></div>
<div class="grp" style="left:975px;top:36px;width:250px;height:45px"></div>
<div class="lbl" style="left:985px;top:51px;letter-spacing:-0.2px">Surface ID:</div>
<div class="tf" style="left:1051px;top:48px;width:70px;height:20px;line-height:18px;font-size:13.5px;padding-left:1.5px;letter-spacing:-0.6px">1</div>
<div class="spin" style="left:1124px;top:42px;width:16px;height:16px"><svg width="14" height="14"><path d="M2.5 6.5h9M7 2v9" stroke="#000" stroke-width="2"/></svg></div>
<div class="spin" style="left:1124px;top:58px;width:16px;height:16px"><svg width="14" height="14"><path d="M2.5 7h9" stroke="#000" stroke-width="2"/></svg></div>
<div class="lbl" style="left:1152px;top:51px">Total:&nbsp;&nbsp; 1</div>

<!-- tabs -->
<div class="a" style="left:941px;top:109px;width:318px;height:527px;border-top:1px solid #fff;border-left:1px solid #fff;border-right:2px solid #000;border-bottom:2px solid #000"></div>
<div class="a" style="left:943px;top:88px;width:66px;height:22px;border-top:1px solid #fff;border-left:1px solid #fff;border-right:2px solid #000;border-radius:4px 0 0 0;background:#C0C0C0"></div>
<div class="a" style="left:1008px;top:86px;width:64px;height:24px;border-top:1px solid #fff;border-left:1px solid #fff;border-right:2px solid #000;border-radius:4px 0 0 0;background:#C0C0C0"></div>
<div class="a" style="left:1072px;top:88px;width:79px;height:22px;border-top:1px solid #fff;border-left:1px solid #fff;border-right:2px solid #000;border-radius:4px 0 0 0;background:#C0C0C0"></div>
<div class="a" style="left:1151px;top:88px;width:66px;height:22px;border-top:1px solid #fff;border-left:1px solid #fff;border-right:2px solid #000;border-radius:4px 0 0 0;background:#C0C0C0"></div>
<div class="a" style="left:943px;top:109px;width:65px;height:1px;background:#fff"></div>
<div class="a" style="left:1072px;top:109px;width:187px;height:1px;background:#fff"></div>
<div class="lbl" style="left:952px;top:91px;font-size:13px;letter-spacing:-0.1px">Surface</div>
<div class="lbl" style="left:1019px;top:91px;font-size:13px;letter-spacing:-0.2px">Subset</div>
<div class="lbl" style="left:1080px;top:91px;font-size:13px;letter-spacing:0.2px">Colormap</div>
<div class="lbl" style="left:1159px;top:91px;font-size:13px;letter-spacing:0.6px">Legend</div>

<!-- threshold group -->
<div class="grp" style="left:947px;top:116px;width:305px;height:139px"></div>
<div class="lbl" style="left:952px;top:123px;letter-spacing:-0.25px">Threshold Function</div>
<div class="a" style="left:952px;top:137px;width:220px;height:27px;border:1px solid #000;border-right-width:2px;border-bottom-width:1px;box-shadow:inset 1px 1px 0 #fff"></div>
<div class="lbl" style="left:956px;top:144px">Density (Q1)</div>
<div class="pb" style="left:1177px;top:139px;width:70px;height:23px;line-height:21px">Select...</div>
<div class="lbl" style="left:954px;top:177px">Min:</div>
<div class="tf" style="left:982px;top:174px;width:97px;height:20px;line-height:18px;font-size:13.5px;padding-left:1.5px;letter-spacing:-0.6px">0.737852</div>
<div class="lbl" style="left:1117px;top:177px">Max:</div>
<div class="tf" style="left:1149px;top:174px;width:98px;height:20px;line-height:18px;font-size:13.5px;padding-left:1.5px;letter-spacing:-0.6px">1.04464</div>
<div class="sld" style="left:952px;top:198px;width:295px;height:17px"><div class="thumb" style="left:1px;top:0"></div><div class="thumb" style="left:277px;top:0"></div></div>
<div class="pb" style="left:1025px;top:225px;width:147px;height:23px;line-height:21px;padding-left:14px;letter-spacing:-0.15px">Threshold Clip</div>
<div class="a" style="left:1030px;top:230px;width:13px;height:13px;border-top:2px solid #8E8B7E;border-left:2px solid #8E8B7E;border-right:1px solid #fff;border-bottom:1px solid #fff;background:#ECE9D8"></div>

<!-- subset group -->
<div class="grp" style="left:947px;top:261px;width:305px;height:60px"></div>
<div class="lbl" style="left:952px;top:268px">SUBSET</div>
<div class="lbl" style="left:956px;top:291px">Increment:</div>
<div class="tf" style="left:1023px;top:289px;width:76px;height:19px;line-height:17px;font-size:13.5px;padding-left:1.5px;letter-spacing:-0.6px">1</div>
<div class="spin" style="left:1103px;top:282px;width:16px;height:16px"><svg width="14" height="14"><path d="M2.5 6.5h9M7 2v9" stroke="#000" stroke-width="2"/></svg></div>
<div class="spin" style="left:1103px;top:298px;width:16px;height:16px"><svg width="14" height="14"><path d="M2.5 7h9" stroke="#000" stroke-width="2"/></svg></div>
<div class="pb" style="left:1168px;top:286px;width:79px;height:23px;line-height:21px">Modify...</div>

<!-- x clip -->
<div class="grp" style="left:947px;top:327px;width:305px;height:75px"></div>
<div class="lbl" style="left:952px;top:334px">X CLIP</div>
<div class="lbl" style="left:952px;top:357px">Min:</div>
<div class="tf" style="left:979px;top:353px;width:98px;height:20px;line-height:18px;font-size:13.5px;padding-left:1.5px;letter-spacing:-0.6px">-0.501258</div>
<div class="lbl" style="left:1116px;top:357px">Max:</div>
<div class="tf" style="left:1148px;top:353px;width:99px;height:20px;line-height:18px;font-size:13.5px;padding-left:1.5px;letter-spacing:-0.6px">4.32756</div>
<div class="sld" style="left:952px;top:378px;width:295px;height:17px"><div class="thumb" style="left:104px"></div><div class="thumb" style="left:211px"></div></div>

<!-- y clip -->
<div class="grp" style="left:947px;top:408px;width:305px;height:74px"></div>
<div class="lbl" style="left:952px;top:415px">Y CLIP</div>
<div class="lbl" style="left:952px;top:438px">Min:</div>
<div class="tf" style="left:979px;top:434px;width:98px;height:20px;line-height:18px;font-size:13.5px;padding-left:1.5px;letter-spacing:-0.6px">-3.15987</div>
<div class="lbl" style="left:1116px;top:438px">Max:</div>
<div class="tf" style="left:1148px;top:434px;width:99px;height:20px;line-height:18px;font-size:13.5px;padding-left:1.5px;letter-spacing:-0.6px">2.88313</div>
<div class="sld" style="left:952px;top:459px;width:295px;height:17px"><div class="thumb" style="left:61px"></div><div class="thumb" style="left:209px"></div></div>

<div class="pb" style="left:1061px;top:650px;width:76px;height:23px;line-height:21px">Close</div>


<!-- ================= TASKBAR ================= -->
<div class="a" style="left:0;top:770px;width:1280px;height:30px;background:linear-gradient(#3168D5 0,#4993E6 1px,#2D6FE0 3px,#245EDC 6px,#2358D8 24px,#1D4EC4 28px,#183EA8 30px)"></div>

<!-- start button -->
<div class="a" style="left:0;top:770px;width:97px;height:30px;border-radius:0 12px 12px 0;background:linear-gradient(#3A9A3A 0,#5CB85C 2px,#3FA63F 6px,#379F37 20px,#2F8A2F 27px,#246F24 30px);box-shadow:inset -2px 0 2px #1E5E1E"></div>
<svg class="a" style="left:10px;top:776px" width="20" height="19"><path d="M2 4q4-2 8 0v6q-4-2-8 0z" fill="#F25E1F"/><path d="M11 4q4 2 8 0v6q-4 2-8 0z" fill="#7DBF30"/><path d="M1 11q4-2 8 0v6q-4-2-8 0z" fill="#3B8BEA"/><path d="M10 11q4 2 8 0v6q-4 2-8 0z" fill="#F6C211"/></svg>
<svg class="a" style="left:36px;top:774px" width="44" height="22"><g stroke="#fff" stroke-width="1.1" fill="none"><path d="M4 5h14M2 11h18M8 5q0 10-6 15M14 5v15"/><path d="M26 4q-2 7-4 11M22 9h8q-1 8-7 11M24 14q4 2 5 5M34 3l-3 8h8M37 7l2 4M32 13h6v6h-6z"/></g></svg>
<!-- quick launch -->
<svg class="a" style="left:108px;top:777px" width="17" height="16"><rect x="2" y="1" width="13" height="13" rx="3" fill="#7EC8F5" stroke="#1D4EC4"/><circle cx="8" cy="8" r="4.5" fill="#fff" stroke="#2D6FE0" stroke-width="1.5"/><path d="M6 10l4-4" stroke="#000"/><circle cx="14" cy="3" r="1.5" fill="#f60"/></svg>

<div class="tsk" style="left:191px;width:158px"><svg class="a" style="left:9px;top:4px" width="17" height="17"><path d="M4 2h8l3 3v11H4z" fill="#fff" stroke="#99A" stroke-width=".8"/><rect x="1" y="3" width="10" height="9" fill="#1B3C9E"/><text x="2" y="11" font-size="9" font-weight="bold" font-family="Liberation Serif" fill="#fff">W</text><path d="M8 13h6M8 15h6" stroke="#99A" stroke-width=".7"/></svg>
<svg class="a" style="left:29px;top:6px" width="36" height="13"><g stroke="#fff" stroke-width="1" fill="none"><path transform="translate(0 0)" d="M1.5.3l-1 2.2M1.5 1.3h3.5M3 1.3l1 1.2M7.5.3l-1 2.2M7.5 1.3h4M9 1.3l1 1.2M1.5 4h9v2.5h-9M1.5 6.5V9h10v2.5l-1 .5M6 3v9M6 9l-4.5 3"/><text x="11.5" y="10.5" font-family="Liberation Mono" font-size="12" fill="#fff" stroke="none" letter-spacing="-1.2">6</text><path transform="translate(18 0)" d="M6 0v1.5M.8 2h10.4M3.5 2.5l1 1.5M8.5 2.5l-1 1.5M.3 4.5h11.4M2.5 6h7v3.5h-7zM2.5 7.7h7M.3 11h11.4M6 9.5V12"/></g></svg>
<span class="a" style="left:65px;top:6px">fieldview...</span></div>

<div class="tsk" style="left:351px;width:158px"><svg class="a" style="left:9px;top:5px" width="17" height="16"><path d="M1 5h9v3H5v2h3M3 3h9" fill="#FFEF00" stroke="#000" stroke-width="1.2"/><path d="M9 3l3 6 4-8" stroke="#000" fill="#FFEF00"/><path d="M1 10l7 4 7-4M1 12l7 4 7-4" stroke="#0c0" stroke-width="1.5" fill="none" stroke-dasharray="1.5 1"/><path d="M1 8l7 4 7-4" stroke="#f00" stroke-width="1.5" fill="none" stroke-dasharray="1.5 1"/><path d="M1 14l7 2 7-2" stroke="#00f" stroke-width="1.5" fill="none"/></svg>
<span class="a" style="left:29px;top:6px">FIELDVIEW for Wi...</span></div>

<div class="tsk" style="left:511px;width:158px"><svg class="a" style="left:9px;top:4px" width="17" height="17"><path d="M3 2h9l3 3v11H3z" fill="#fff" stroke="#999" stroke-width=".8"/><rect x="1" y="2" width="11" height="2" fill="#E00"/><path d="M6 14q2-5 3-10q1 6 4 8q-4 0-7 2z" fill="none" stroke="#E00" stroke-width="1"/></svg>
<span class="a" style="left:29px;top:6px">FVUsers_Guide_wi...</span></div>

<div class="tsk" style="left:671px;width:158px;background:#1E52B7;box-shadow:inset 1px 1px 1px #163E8F,inset -1px -1px 0 #2A63CF"><svg class="a" style="left:9px;top:5px" width="17" height="16"><path d="M1 5h9v3H5v2h3M3 3h9" fill="#FFEF00" stroke="#000" stroke-width="1.2"/><path d="M9 3l3 6 4-8" stroke="#000" fill="#FFEF00"/><path d="M1 10l7 4 7-4M1 12l7 4 7-4" stroke="#0c0" stroke-width="1.5" fill="none" stroke-dasharray="1.5 1"/><path d="M1 8l7 4 7-4" stroke="#f00" stroke-width="1.5" fill="none" stroke-dasharray="1.5 1"/><path d="M1 14l7 2 7-2" stroke="#00f" stroke-width="1.5" fill="none"/></svg>
<span class="a" style="left:29px;top:7px">FIELDVIEW for Wi...</span></div>

<div class="tsk" style="left:831px;width:158px"><svg class="a" style="left:9px;top:4px" width="17" height="17"><path d="M4 2h8l3 3v11H4z" fill="#fff" stroke="#99A" stroke-width=".8"/><rect x="1" y="3" width="10" height="9" fill="#1B3C9E"/><text x="2" y="11" font-size="9" font-weight="bold" font-family="Liberation Serif" fill="#fff">W</text></svg>
<svg class="a" style="left:29px;top:6px" width="97" height="13"><g stroke="#fff" stroke-width="1" fill="none"><path transform="translate(0 0)" d="M6 0v2M.5 2.5h11M3.5 4h5v2h-5zM1.5 12V7.5h9v4l-1 .5M4 8.8h4v2h-4z"/><path transform="translate(12 0)" d="M1 .8l1 1.2M.5 5h2v5M.5 11.5q3-1.2 11 0M4 2.3h7.5M7.7 0v9.5M4.7 3.8h6v3h-6zM7.7 7l-3 3M7.7 7l3 3"/><path transform="translate(24 0)" d="M2.8 .3l-2 4h3l-3 4h3.8M.5 11.2l3.8-1.8M8 0v1.5M5 3V2h6.5v1M6.2 4.5h4.2M5 6.5h6.5M8.2 6.5v5.5M6.5 8.5l-1.5 2.5M10 8.5l1.5 2.5"/><path transform="translate(36 0)" d="M6 .3L.5 5M6 .3L11.5 5M3.5 5.5h5M2.5 7.5h7v4.3h-7z"/><path transform="translate(48 0)" d="M.3 3.5h4.2M2.5 0v12M2.5 4l-2 4.5M2.5 4.5l2 2M8.5 .3L5 4.5M8.5 .3l3.2 4M6.5 4.7h4M6 6.5l1 2M8.7 6l.5 2.5M11.3 6l-1.3 3M5 11.5h6.7"/><path transform="translate(60 0)" d="M.8 .8l1.2 1.2M.4 4l1.2 1.2M.4 10.5l2-3.5M3.8 1h3.7v6.5H3.8zM5.6 2.5v4M4.5 8.5l-1.2 3M7 8.5l1.2 3M9.5 2v6.5M11.5 0v11.5l-1-.5"/><path transform="translate(72 0)" d="M.3 1h6.5M3 1L1.5 5M2 3.7h4L5 8 1 11.8M2.3 6.3l2 2M8.8 2v6.5M11.3 0v11.5l-1-.5"/><path transform="translate(84 0)" d="M.5 2.5h11M5 .2L2 6.5h9.2M6.5 4.5V12M.5 9h11"/></g></svg>
<span class="a" style="left:121px;top:6px">...</span></div>

<!-- CH -->
<div class="a" style="left:1132px;top:779px;width:16px;height:16px;background:#2A5DC8"></div>
<div class="a mono" style="left:1133px;top:780px;font-size:12px;color:#fff;letter-spacing:-1.2px">CH</div>
<!-- tray -->
<div class="a" style="left:1185px;top:770px;width:95px;height:30px;background:linear-gradient(#0C8FE8 0,#16A4F2 2px,#13A0F0 8px,#0F94E8 20px,#0C88DC 28px,#0A64C8 30px);border-left:1px solid #0A3A8A;box-shadow:inset 1px 0 0 #3FC8FF"></div>
<div class="a" style="left:1233px;top:784px;width:40px;height:5px;background:rgba(255,255,255,.45)"></div>
<svg class="a" style="left:1184px;top:762px" width="96" height="38">
<path d="M6 25q10-1 20-8t8-11q-4-3-14 3t-15 17q-3 8 4 9t14-3" stroke="#D8A070" stroke-width="4.5" fill="none" opacity=".7" stroke-linecap="round"/>
<text x="31" y="19.5" font-family="Liberation Serif" font-weight="bold" font-style="italic" font-size="17.5" fill="#1A4670" opacity=".85" textLength="54" lengthAdjust="spacingAndGlyphs">wor<tspan fill="#C8A040">k</tspan>s</text>
</svg>

<svg class="a" style="left:1194px;top:776px" width="22" height="18"><rect x="7" y="1" width="7" height="6" fill="#2A2E66" stroke="#8A8ACC" stroke-width=".8"/><rect x="2" y="5" width="7" height="7" fill="#3A3E7A" stroke="#9A9ADC" stroke-width=".8"/><rect x="2" y="13" width="5" height="2" fill="#C8C8F0"/><path d="M9 9l6 6M15 9l-6 6" stroke="#E82020" stroke-width="2"/></svg>
<div class="a" style="left:1214px;top:777px;width:16px;height:16px;background:#D80A0A"><svg width="16" height="16"><path d="M2 12q2-10 8-9t4 4" stroke="#fff" stroke-width="1.8" fill="none"/><path d="M6 7l3 7 4-4" stroke="#fff" stroke-width="1.6" fill="none"/></svg></div>
<div class="a mono" style="left:1238px;top:779px;font-size:12px;color:#fff;letter-spacing:-1.2px">14:13</div>

</body></html>
